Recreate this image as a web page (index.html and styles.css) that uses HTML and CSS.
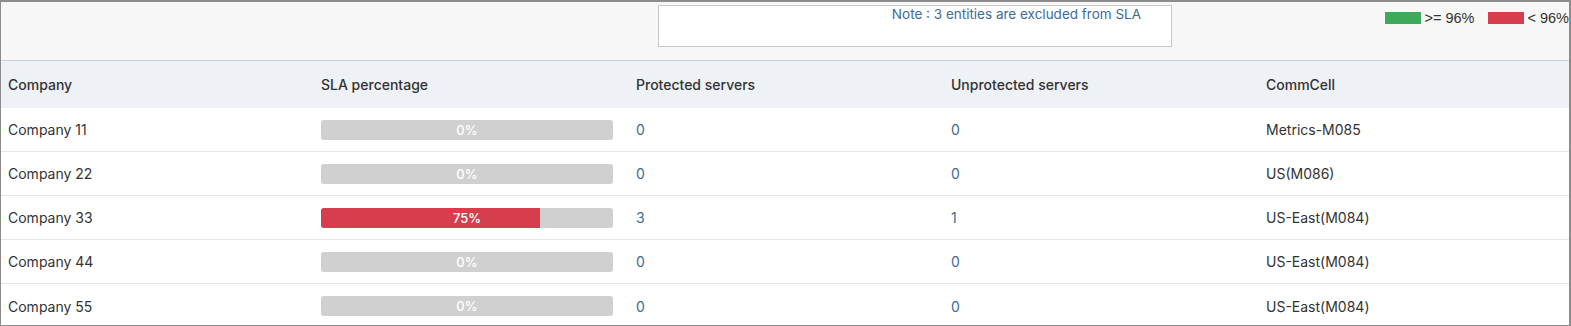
FILE: index.html
```html
<!DOCTYPE html>
<html lang="en">
  <head>
    <meta charset="UTF-8" />
    <title>SLA by Company</title>
    <link rel="stylesheet" href="styles.css">
  </head>
  <body>
    <div class="panel">
      <!-- Top bar: note and legend -->
      <div class="top-bar">
        <div class="note-box">
          <span class="note-text">Note : 3 entities are excluded from SLA</span>
        </div>
        <div class="legend">
          <span class="swatch swatch-green"></span>
          <span class="legend-label">&gt;= 96%</span>
          <span class="swatch swatch-red"></span>
          <span class="legend-label">&lt; 96%</span>
        </div>
      </div>

      <!-- Table -->
      <div class="table">
        <div class="row head">
          <div class="cell">Company</div>
          <div class="cell">SLA percentage</div>
          <div class="cell">Protected servers</div>
          <div class="cell">Unprotected servers</div>
          <div class="cell">CommCell</div>
        </div>

        <div class="row">
          <div class="cell">Company 11</div>
          <div class="cell"><div class="bar"><span class="bar-text">0%</span></div></div>
          <div class="cell link">0</div>
          <div class="cell link">0</div>
          <div class="cell">Metrics-M085</div>
        </div>

        <div class="row">
          <div class="cell">Company 22</div>
          <div class="cell"><div class="bar"><span class="bar-text">0%</span></div></div>
          <div class="cell link">0</div>
          <div class="cell link">0</div>
          <div class="cell">US(M086)</div>
        </div>

        <div class="row">
          <div class="cell">Company 33</div>
          <div class="cell">
            <div class="bar">
              <div class="bar-fill red" style="width: 75%"></div>
              <span class="bar-text">75%</span>
            </div>
          </div>
          <div class="cell link">3</div>
          <div class="cell link">1</div>
          <div class="cell">US-East(M084)</div>
        </div>

        <div class="row">
          <div class="cell">Company 44</div>
          <div class="cell"><div class="bar"><span class="bar-text">0%</span></div></div>
          <div class="cell link">0</div>
          <div class="cell link">0</div>
          <div class="cell">US-East(M084)</div>
        </div>

        <div class="row last">
          <div class="cell">Company 55</div>
          <div class="cell"><div class="bar"><span class="bar-text">0%</span></div></div>
          <div class="cell link">0</div>
          <div class="cell link">0</div>
          <div class="cell">US-East(M084)</div>
        </div>
      </div>
    </div>
  </body>
</html>
```

FILE: styles.css
```css
body {
  margin: 0;
  font-family: "Inter", sans-serif;
  font-size: 14px;
  color: #333;
  background-color: #fff;
}

.panel {
  height: 326px;
  box-sizing: border-box;
  border: 1px solid #8c8c8c;
  border-top-width: 2px;
  border-right-width: 2px;
  overflow: hidden;
}

/* Top area */
.top-bar {
  height: 58px;
  background-color: #f7f7f7;
  border-bottom: 1px solid #cfcfcf;
  display: flex;
  align-items: flex-start;
}

.note-box {
  margin: 3px 0 0 657px;
  width: 514px;
  height: 42px;
  background-color: #fff;
  border: 1px solid #c8c8c8;
  display: flex;
  justify-content: flex-end;
  padding-right: 30px;
  box-sizing: border-box;
}

.note-text {
  color: #3d6b96;
  font-size: 13.5px;
  margin-top: 0;
}

.legend {
  margin: 8px 0 0 auto;
  display: flex;
  align-items: center;
  font-family: "Liberation Sans", sans-serif;
  font-size: 14.5px;
  color: #333;
}

.swatch {
  width: 36px;
  height: 12px;
  margin-right: 3px;
}

.swatch-green {
  background-color: #3daa5a;
}

.swatch-red {
  background-color: #d63e4e;
  margin-left: 14px;
}

/* Table */
.row {
  display: grid;
  grid-template-columns: 313px 315px 315px 315px 1fr;
  height: 44px;
  align-items: center;
  border-bottom: 1px solid #e6e6e6;
  box-sizing: border-box;
}

.row.head {
  height: 47px;
  background-color: #eef1f6;
  border-bottom: none;
  font-weight: 500;
}

.row.last {
  border-bottom: none;
}

.cell {
  padding-left: 7px;
}

.link {
  color: #3d6b96;
}

.bar {
  position: relative;
  width: 292px;
  height: 20px;
  background-color: #d0d0d0;
  border-radius: 3px;
  overflow: hidden;
  display: flex;
  align-items: center;
  justify-content: center;
}

.bar-fill {
  position: absolute;
  top: 0;
  left: 0;
  height: 100%;
}

.bar-fill.red {
  background-color: #d63e4e;
}

.bar-text {
  position: relative;
  color: #fff;
  font-size: 13px;
  font-weight: 500;
}
```
